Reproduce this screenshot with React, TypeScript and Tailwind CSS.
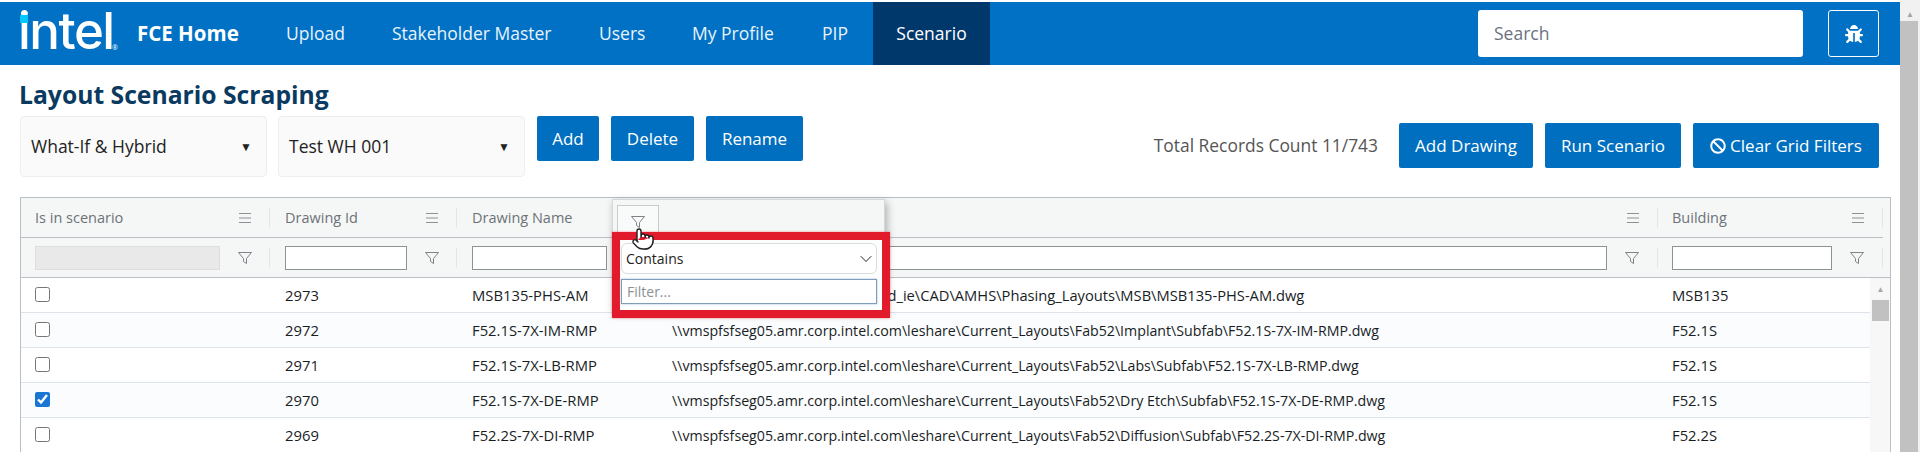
import React from "react";
import { ChevronDown, Pointer } from "lucide-react";
import { FaBan, FaBug } from "react-icons/fa";

const font = "font-['Open_Sans','Noto_Sans',sans-serif]";

const navItems = [
  { label: "Upload", cls: "w-[106px]" },
  { label: "Stakeholder Master", cls: "w-[207px]" },
  { label: "Users", cls: "w-[93px]" },
  { label: "My Profile", cls: "w-[130px]" },
  { label: "PIP", cls: "w-[51px]" },
];

const rows = [
  { id: "2973", name: "MSB135-PHS-AM", path: "\\\\vmspfsfseg05.intel.com\\shared_ie\\CAD\\AMHS\\Phasing_Layouts\\MSB\\MSB135-PHS-AM.dwg", pathCls: "text-[14.7px]", building: "MSB135", checked: false },
  { id: "2972", name: "F52.1S-7X-IM-RMP", path: "\\\\vmspfsfseg05.amr.corp.intel.com\\leshare\\Current_Layouts\\Fab52\\Implant\\Subfab\\F52.1S-7X-IM-RMP.dwg", pathCls: "text-[14.2px]", building: "F52.1S", checked: false },
  { id: "2971", name: "F52.1S-7X-LB-RMP", path: "\\\\vmspfsfseg05.amr.corp.intel.com\\leshare\\Current_Layouts\\Fab52\\Labs\\Subfab\\F52.1S-7X-LB-RMP.dwg", pathCls: "text-[14.2px]", building: "F52.1S", checked: false },
  { id: "2970", name: "F52.1S-7X-DE-RMP", path: "\\\\vmspfsfseg05.amr.corp.intel.com\\leshare\\Current_Layouts\\Fab52\\Dry Etch\\Subfab\\F52.1S-7X-DE-RMP.dwg", pathCls: "text-[14.2px]", building: "F52.1S", checked: true },
  { id: "2969", name: "F52.2S-7X-DI-RMP", path: "\\\\vmspfsfseg05.amr.corp.intel.com\\leshare\\Current_Layouts\\Fab52\\Diffusion\\Subfab\\F52.2S-7X-DI-RMP.dwg", pathCls: "text-[14.2px]", building: "F52.2S", checked: false },
];

const FunnelIcon = () => (
  <svg width="16" height="16" viewBox="0 0 16 16" fill="none" stroke="#7d8388" strokeWidth="1" className="shrink-0">
    <path d="M1.5 2.5h13L9.5 8.5v5l-3-2v-3z" />
  </svg>
);

const MenuIcon = () => (
  <svg width="16" height="16" viewBox="0 0 16 16" stroke="#8d9296" strokeWidth="1.2" className="shrink-0">
    <path d="M2 3.5h12M2 8h12M2 12.5h12" />
  </svg>
);

const Sep = () => <div className="h-5 w-px bg-[#e3e6e8] shrink-0" />;

const HeaderCell = ({ label, cls, pad }: { label: string; cls: string; pad: string }) => (
  <div className={`${cls} ${pad} shrink-0 flex items-center`}>
    <span className="flex-1 text-[14.5px] text-[#6d7277] truncate">{label}</span>
    <MenuIcon />
    <div className="w-4" />
    <Sep />
  </div>
);

const FilterCell = ({ cls, inputCls, pad, disabled }: { cls: string; inputCls: string; pad: string; disabled?: boolean }) => (
  <div className={`${cls} ${pad} shrink-0 flex items-center`}>
    <div className={`${inputCls} h-6 border shrink-0 ${disabled ? "bg-[#e9e9e9] border-[#dedede]" : "bg-white border-[#8d9296]"}`} />
    <div className="flex-1 flex justify-center">
      <FunnelIcon />
    </div>
    <Sep />
  </div>
);

const BlueButton = ({ children, cls }: { children: React.ReactNode; cls: string }) => (
  <button className={`${cls} h-[45px] bg-[#006fc0] text-white text-[17px] rounded-[2px] flex items-center justify-center shrink-0`}>
    {children}
  </button>
);

const Select = ({ label }: { label: string }) => (
  <div className="w-[247px] h-[61px] bg-[#fafafa] border border-[#eeeeee] rounded-[4px] flex items-center justify-between pl-[10px] pr-[14px] text-[17.5px] text-[#222]">
    <span>{label}</span>
    <span className="text-[12px] text-[#222]">▼</span>
  </div>
);

export default function App() {
  return (
    <div className={`${font} relative w-[1920px] h-[452px] overflow-hidden bg-white flex`}>
      <div className="w-[1900px] shrink-0 pt-[2px]">
        <header className="h-[63px] bg-[#0071c5] flex items-center text-white">
          <div className="relative w-[137px] pl-[18px] shrink-0 h-full">
            <span className="font-['Inter',sans-serif] font-medium text-[51px] leading-[58px] tracking-[-1.5px]">intel</span>
            <span className="absolute left-[20px] top-[13px] w-[8px] h-[8px] bg-[#00c7fd]" />
            <span className="absolute left-[112px] top-[41px] text-[7px]">®</span>
          </div>
          <div className="w-[149px] shrink-0 text-[20.5px] font-bold">FCE Home</div>
          {navItems.map((n) => (
            <div key={n.label} className={`${n.cls} shrink-0 text-[17.5px] text-[#e8f3fb] whitespace-nowrap`}>{n.label}</div>
          ))}
          <div className="w-[117px] h-full bg-[#00386b] flex items-center justify-center text-[17.5px] shrink-0">Scenario</div>
          <div className="ml-[488px] w-[325px] h-[47px] bg-white rounded-[3px] flex items-center pl-4 text-[17.5px] text-[#6b7280] shrink-0">Search</div>
          <div className="ml-[25px] w-[51px] h-[47px] border border-white rounded-[3px] flex items-center justify-center shrink-0">
            <FaBug size={18} />
          </div>
        </header>

        <div className="pl-5 pr-[21px]">
          <h1 className="h-[51px] pt-[14px] -ml-px text-[24.7px] leading-[32px] font-bold text-[#0a3a5f]">Layout Scenario Scraping</h1>
          <div className="flex items-start h-[81px]">
            <Select label="What-If & Hybrid" />
            <div className="w-[11px]" />
            <Select label="Test WH 001" />
            <div className="w-[12px]" />
            <BlueButton cls="w-[62px]">Add</BlueButton>
            <div className="w-3" />
            <BlueButton cls="w-[83px]">Delete</BlueButton>
            <div className="w-3" />
            <BlueButton cls="w-[97px]">Rename</BlueButton>
            <div className="flex-1 flex justify-end items-center gap-3 mt-[7px]">
              <span className="text-[17.4px] text-[#555] mr-[9px]">Total Records Count 11/743</span>
              <BlueButton cls="w-[134px]">Add Drawing</BlueButton>
              <BlueButton cls="w-[136px]">Run Scenario</BlueButton>
              <BlueButton cls="w-[186px] gap-1 whitespace-nowrap"><FaBan size={16} /> Clear Grid Filters</BlueButton>
            </div>
          </div>

          <div className="w-[1871px] border border-[#babfc7] bg-[#f5f7f7]">
            <div className="flex h-[40px] w-[1862px] border-b border-[#babfc7]">
              <HeaderCell label="Is in scenario" cls="w-[249px]" pad="pl-[14px]" />
              <HeaderCell label="Drawing Id" cls="w-[187px]" pad="pl-[15px]" />
              <HeaderCell label="Drawing Name" cls="w-[200px]" pad="pl-[15px]" />
              <HeaderCell label="Drawing Path" cls="w-[1001px]" pad="pl-[15px]" />
              <HeaderCell label="Building" cls="w-[225px]" pad="pl-[14px]" />
            </div>
            <div className="flex h-[40px] w-[1869px] border-b border-[#babfc7]">
              <FilterCell cls="w-[249px]" inputCls="w-[185px]" pad="pl-[14px]" disabled />
              <FilterCell cls="w-[187px]" inputCls="w-[122px]" pad="pl-[15px]" />
              <FilterCell cls="w-[200px]" inputCls="w-[135px]" pad="pl-[15px]" />
              <FilterCell cls="w-[1001px]" inputCls="w-[935px]" pad="pl-[15px]" />
              <FilterCell cls="w-[225px]" inputCls="w-[160px]" pad="pl-[14px]" />
            </div>
            <div className="flex bg-white">
              <div className="w-[1849px] shrink-0">
                {rows.map((r, i) => (
                  <div key={r.id} className={`flex items-center h-[35px] pt-px border-b border-[#dde2eb] text-[14.8px] text-[#181d1f] ${i % 2 ? "bg-[#fbfcfd]" : "bg-white"}`}>
                    <div className="w-[249px] pl-[14px] shrink-0 flex items-center">
                      <input type="checkbox" readOnly checked={r.checked} className="w-[15px] h-[15px] accent-[#1976d2] -mt-[3px]" />
                    </div>
                    <div className="w-[187px] pl-[15px] shrink-0">{r.id}</div>
                    <div className="w-[200px] pl-[15px] shrink-0">{r.name}</div>
                    <div className={`w-[1001px] pl-[15px] shrink-0 whitespace-nowrap ${r.pathCls}`}>{r.path}</div>
                    <div className="flex-1 pl-[14px]">{r.building}</div>
                  </div>
                ))}
              </div>
              <div className="w-5 pl-px bg-[#f7f7f7] flex flex-col items-center">
                <span className="h-[22px] pt-[7px] text-[8px] leading-[8px] text-[#a8a8a8]">▲</span>
                <div className="w-[17px] h-[21px] bg-[#c1c1c1]" />
              </div>
            </div>
          </div>
        </div>
      </div>

      {/* page scrollbar */}
      <div className="w-5 bg-[#f1f1f1] flex flex-col">
        <span className="h-[21px] pt-[10px] text-center text-[8px] leading-[8px] text-[#a3a3a3]">▲</span>
        <div className="flex-1 w-[18px] bg-[#c1c1c1]" />
      </div>

      {/* floating filter popup */}
      <div className="absolute left-[612px] top-[199px] w-[273px] h-[112px] bg-[#f5f7f7] border border-[#d5d8da] shadow-[2px_3px_8px_rgba(0,0,0,0.3)]">
        <div className="ml-[4px] mt-[5px] w-[42px] h-[34px] bg-[#f9fafa] border border-[#c8ccce] flex justify-center pt-[8px]">
          <FunnelIcon />
        </div>
      </div>

      {/* red annotation frame */}
      <div className="absolute left-[612px] top-[232px] w-[278px] h-[86px] border-8 border-[#e11b2b] bg-[#fcfdfd] flex flex-col pl-px pr-[5px] pt-[3px] gap-[5px] shadow-[0_0_2px_rgba(225,27,43,0.5)]">
        <div className="h-[31px] bg-white border border-[#d9dcde] rounded-[6px] flex items-center justify-between pl-[4px] text-[14px] text-[#222]">
          <span>Contains</span>
          <ChevronDown size={20} strokeWidth={1.2} />
        </div>
        <div className="h-[25px] bg-white border border-[#7f9db9] shadow-[0_0_2px_#9cc3e0] flex items-center pl-[5px] text-[14px] text-[#8a8f94]">Filter...</div>
      </div>

      {/* mouse pointer */}
      <div className="absolute left-[631px] top-[227px]">
        <Pointer size={24} fill="#ffffff" stroke="#222222" strokeWidth={1.4} />
      </div>
    </div>
  );
}
